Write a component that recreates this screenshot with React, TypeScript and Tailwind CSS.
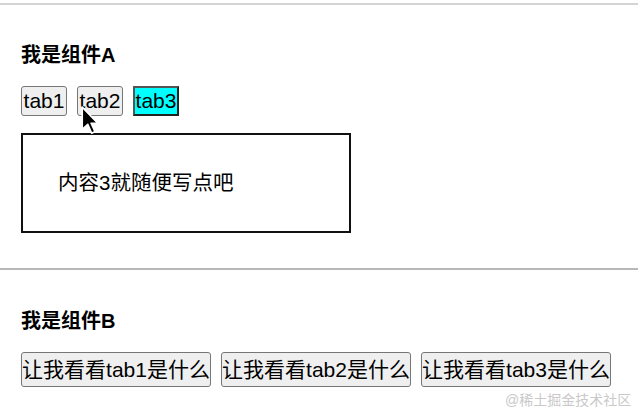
export default function App() {
  const tabs = ["tab1", "tab2", "tab3"]
  const active = 2

  return (
    <div className="relative h-[420px] w-[638px] overflow-hidden bg-white text-black [font-family:'Liberation_Sans','Noto_Sans_CJK_SC',sans-serif]">
      <div className="mt-[3px] h-[2px] bg-[#d4d4d4]" />

      <section className="px-[21px]">
        <h2 className="mt-[38px] h-[24px] text-[20px] font-bold leading-[24px]">我是组件A</h2>
        <div className="mt-[19px] flex h-[30px] gap-[10px]">
          {tabs.map((t, i) =>
            i === active ? (
              <button key={t} className="h-[30px] w-[46px] border-2 border-t-[#555] border-l-[#555] border-b-[#222] border-r-[#222] bg-[#00ffff] px-0 text-[21px] leading-[24px]">
                {t}
              </button>
            ) : (
              <button key={t} className="h-[30px] w-[46px] rounded-[3px] border border-[#767676] bg-[#efefef] px-0 text-[21px] leading-[24px]">
                {t}
              </button>
            )
          )}
        </div>
        <div className="mt-[17px] flex h-[100px] w-[330px] items-center border-2 border-[#111] pl-[35px] text-[20.5px]">
          内容3就随便写点吧
        </div>
      </section>

      <div className="mt-[35px] h-[2px] bg-[#b8b8b8]" />

      <section className="px-[21px]">
        <h2 className="mt-[39px] h-[24px] text-[20px] font-bold leading-[24px]">我是组件B</h2>
        <div className="mt-[19px] flex gap-[10px]">
          {tabs.map((t) => (
            <button key={t} className="h-[35px] w-[190px] rounded-[3px] border border-[#767676] bg-[#efefef] px-0 text-[21px] leading-[29px]">
              让我看看{t}是什么
            </button>
          ))}
        </div>
      </section>

      <div className="absolute left-[505px] top-[391px] text-[14px] leading-[18px] text-[#c9c9c9]">@稀土掘金技术社区</div>

      <svg className="absolute left-[80px] top-[106px]" width="20" height="30" viewBox="0 0 18 27">
        <path d="M2 1 L2 21 L7 16.5 L10.5 24.5 L13.5 23 L10 15.5 L16 15.5 Z" fill="#000" stroke="#fff" strokeWidth="1.5" strokeLinejoin="round" />
      </svg>
    </div>
  )
}
